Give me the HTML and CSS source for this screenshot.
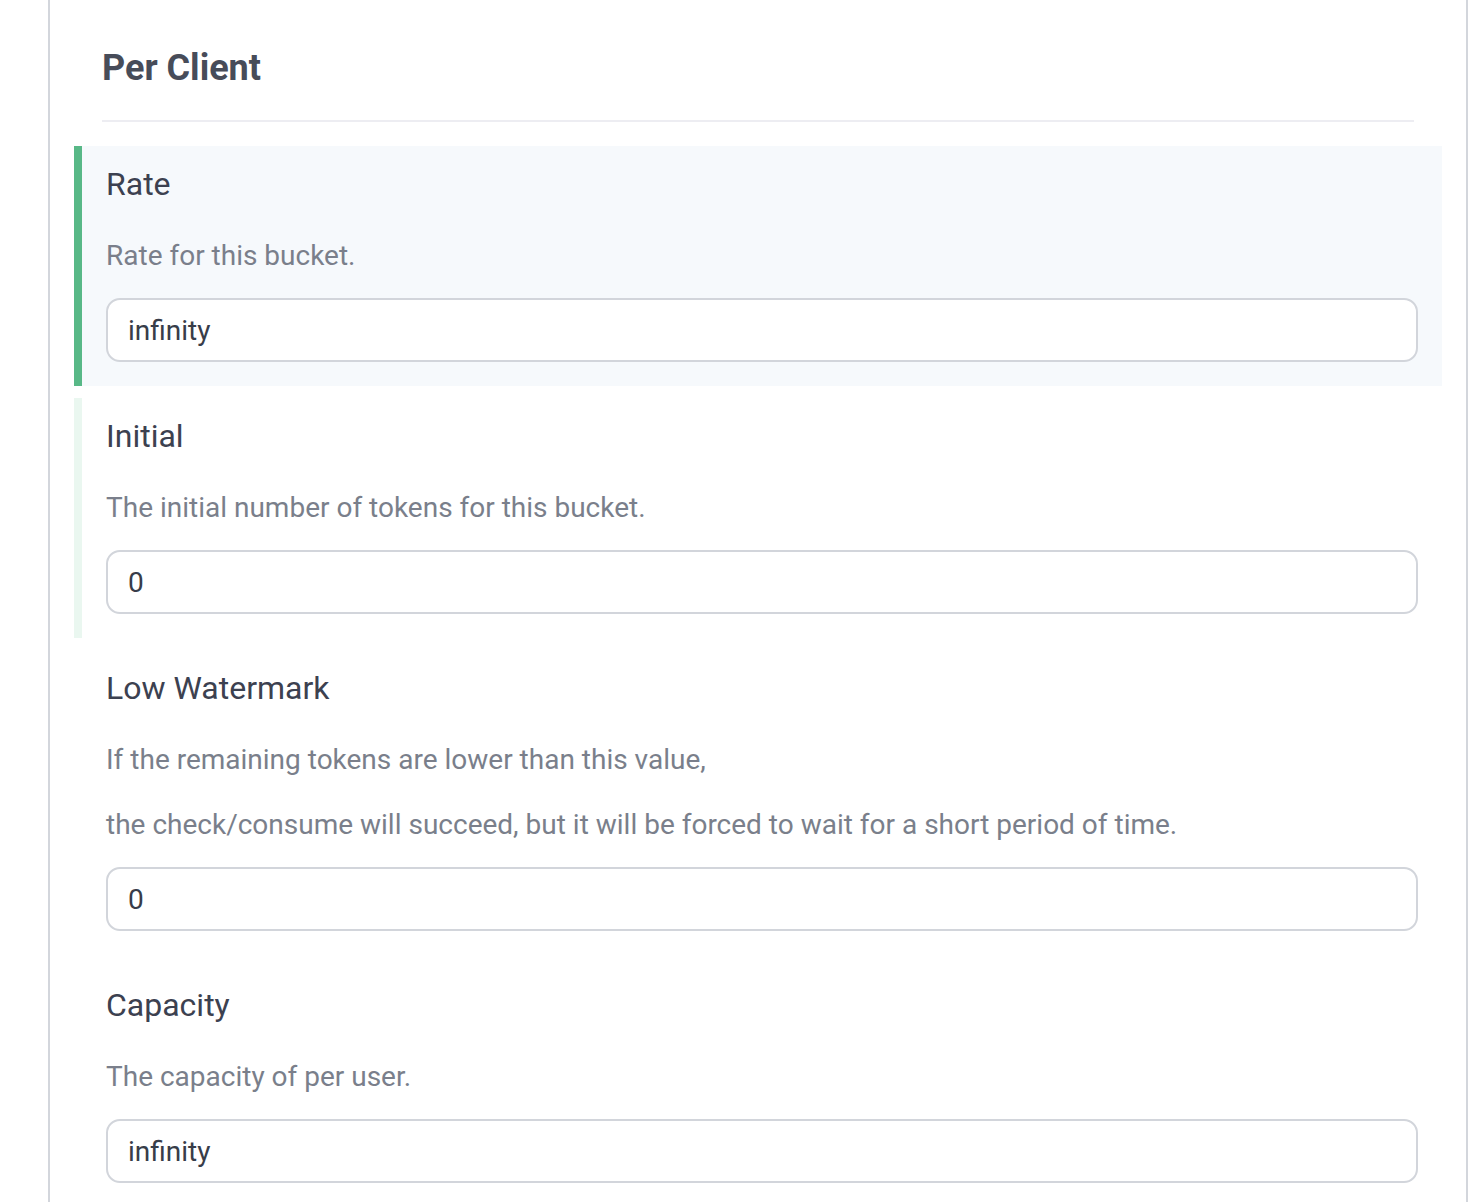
FILE: index.html
```html
<!DOCTYPE html>
<html lang="en">
<head>
<meta charset="utf-8">
<title>Per Client</title>
<link rel="stylesheet" href="styles.css">
</head>
<body>
<div class="panel">
  <h2 class="section-title">Per Client</h2>

  <div class="field field--active">
    <label class="field-label" for="rate">Rate</label>
    <div class="field-help"><p>Rate for this bucket.</p></div>
    <input class="field-input" id="rate" type="text" value="infinity">
  </div>

  <div class="field field--hover">
    <label class="field-label" for="initial">Initial</label>
    <div class="field-help"><p>The initial number of tokens for this bucket.</p></div>
    <input class="field-input" id="initial" type="text" value="0">
  </div>

  <div class="field">
    <label class="field-label" for="low">Low Watermark</label>
    <div class="field-help">
      <p>If the remaining tokens are lower than this value,</p>
      <p>the check/consume will succeed, but it will be forced to wait for a short period of time.</p>
    </div>
    <input class="field-input" id="low" type="text" value="0">
  </div>

  <div class="field">
    <label class="field-label" for="capacity">Capacity</label>
    <div class="field-help"><p>The capacity of per user.</p></div>
    <input class="field-input" id="capacity" type="text" value="infinity">
  </div>
</div>
</body>
</html>
```
FILE: styles.css
```css
html, body {
  margin: 0;
  padding: 0;
  background: #ffffff;
}

body {
  font-family: Roboto, "Liberation Sans", sans-serif;
  overflow: hidden;
}

.panel {
  margin-left: 48px;
  width: 1420px;
  min-height: 1202px;
  border-left: 2px solid #d3d6dc;
  border-right: 2px solid #d3d6dc;
  padding: 46px 52px 0;
  box-sizing: border-box;
}

.section-title {
  margin: 0;
  font-size: 36px;
  line-height: 44px;
  font-weight: 700;
  color: #474c59;
  padding-bottom: 30px;
  border-bottom: 2px solid #ededf2;
}

.field {
  margin: 0 -28px 12px;
  padding: 20px 24px 24px;
  border-left: 8px solid transparent;
}

.section-title + .field {
  margin-top: 24px;
}

.field--active {
  border-left-color: #58b887;
  background: #f6f9fc;
}

.field--hover {
  border-left-color: #eaf7f0;
}

.field-label {
  display: block;
  font-size: 32px;
  line-height: 36px;
  color: #3c4150;
}

.field-help {
  margin-top: 38px;
  color: #7a7f8b;
  font-size: 28px;
  line-height: 32px;
}

.field-help p {
  margin: 0;
}

.field-help p + p {
  margin-top: 33px;
}

.field-input {
  display: block;
  box-sizing: border-box;
  width: 100%;
  height: 64px;
  margin-top: 26px;
  padding: 0 20px;
  border: 2px solid #d2d5db;
  border-radius: 14px;
  background: #ffffff;
  font-family: Roboto, "Liberation Sans", sans-serif;
  font-size: 28px;
  color: #383d49;
  outline: none;
}
```
